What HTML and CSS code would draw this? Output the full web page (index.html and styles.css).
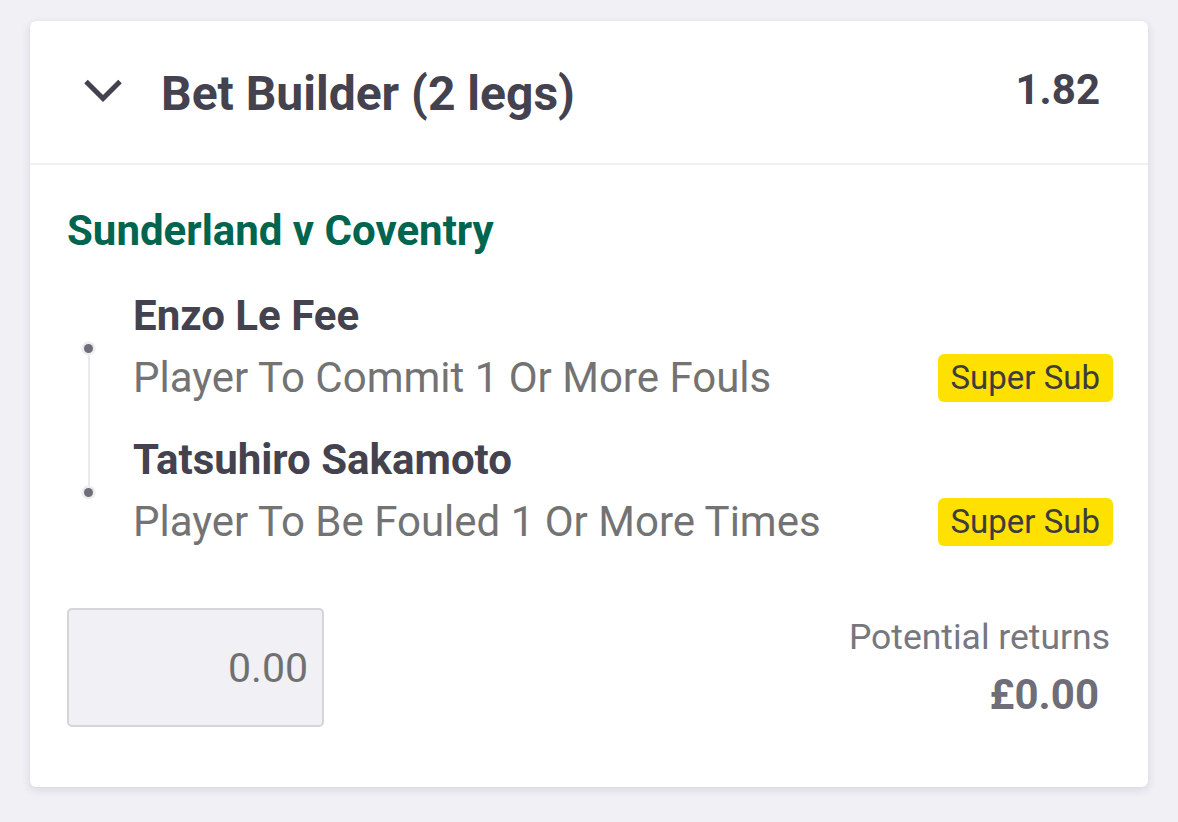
FILE: index.html
```html
<!DOCTYPE html>
<html lang="en">
<head>
<meta charset="utf-8">
<title>Bet Builder</title>
<link rel="stylesheet" href="styles.css">
</head>
<body>
<div class="card">
  <div class="header">
    <svg class="chevron" width="40" height="26" viewBox="0 0 40 26" aria-hidden="true">
      <path d="M3 3.5 L20 20.5 L37 3.5" fill="none" stroke="#43424e" stroke-width="5" stroke-linejoin="miter"/>
    </svg>
    <div class="title">Bet Builder (2 legs)</div>
    <div class="odds">1.82</div>
  </div>
  <div class="body">
    <div class="event">Sunderland v Coventry</div>
    <div class="legs">
      <div class="leg">
        <div class="marker"><span class="dot"></span></div>
        <div class="leg-content">
          <div class="player">Enzo Le Fee</div>
          <div class="market-row">
            <div class="market">Player To Commit 1 Or More Fouls</div>
            <div class="badge">Super Sub</div>
          </div>
        </div>
      </div>
      <div class="leg">
        <div class="marker"><span class="dot"></span></div>
        <div class="leg-content">
          <div class="player">Tatsuhiro Sakamoto</div>
          <div class="market-row">
            <div class="market">Player To Be Fouled 1 Or More Times</div>
            <div class="badge">Super Sub</div>
          </div>
        </div>
      </div>
    </div>
    <div class="footer">
      <div class="stake">0.00</div>
      <div class="returns">
        <div class="returns-label">Potential returns</div>
        <div class="returns-value">£0.00</div>
      </div>
    </div>
  </div>
</div>
</body>
</html>
```
FILE: styles.css
```css
* { box-sizing: border-box; }
html, body { margin: 0; padding: 0; }
body {
  background: #f0f0f5;
  font-family: Roboto, "Liberation Sans", Arial, sans-serif;
  padding-top: 21px;
  height: 822px;
}
.card {
  margin: 0 30px;
  width: 1118px;
  background: #ffffff;
  border-radius: 6px;
  box-shadow: 0 3px 10px rgba(40, 40, 70, 0.12), 0 0 2px rgba(40, 40, 70, 0.06);
}
.header {
  display: flex;
  align-items: center;
  height: 144px;
  padding: 0 48px 0 53px;
  border-bottom: 2px solid #efeff3;
}
.chevron {
  flex: none;
  display: block;
  margin-right: 38px;
  margin-top: -2px;
}
.title {
  flex: 1;
  font-size: 48px;
  font-weight: 700;
  color: #43424e;
  line-height: 56px;
  margin-top: 4px;
}
.odds {
  font-size: 42px;
  font-weight: 700;
  color: #43424e;
  line-height: 50px;
  margin-top: -4px;
}
.body {
  padding: 41px 35px 60px 37px;
}
.event {
  font-size: 42px;
  font-weight: 700;
  color: #00654e;
  line-height: 50px;
}
.legs {
  position: relative;
  margin-top: 35px;
  display: flex;
  flex-direction: column;
  gap: 33px;
}
.legs::before {
  content: "";
  position: absolute;
  left: 20.5px;
  width: 2px;
  top: 57px;
  bottom: 53px;
  background: #e9e9ee;
}
.leg {
  display: flex;
}
.marker {
  flex: none;
  width: 66px;
  display: flex;
  align-items: center;
  padding-top: 4px;
}
.dot {
  position: relative;
  display: block;
  width: 9px;
  height: 9px;
  margin-left: 17px;
  border-radius: 50%;
  background: #6e6e78;
  box-shadow: 0 0 0 2.5px #ececf1;
}
.leg-content {
  flex: 1;
}
.player {
  font-size: 42px;
  font-weight: 700;
  color: #43424e;
  line-height: 50px;
}
.market-row {
  display: flex;
  align-items: center;
  justify-content: space-between;
  margin-top: 13px;
  height: 48px;
}
.market {
  font-size: 42px;
  color: #737373;
  line-height: 48px;
}
.badge {
  background: #ffe100;
  color: #3d3d3d;
  font-size: 33px;
  line-height: 48px;
  height: 48px;
  padding: 0 13px;
  border-radius: 6px;
}
.footer {
  display: flex;
  justify-content: space-between;
  align-items: flex-start;
  margin-top: 62px;
}
.stake {
  width: 257px;
  height: 119px;
  background: #f0f0f5;
  border: 2px solid #d5d5d9;
  border-radius: 5px;
  font-size: 41px;
  color: #707070;
  display: flex;
  align-items: center;
  justify-content: flex-end;
  padding-right: 14px;
}
.returns {
  text-align: right;
  padding-top: 8px;
  padding-right: 3px;
}
.returns-label {
  font-size: 35.5px;
  color: #777780;
  line-height: 42px;
}
.returns-value {
  font-size: 42px;
  font-weight: 700;
  color: #6e6d78;
  line-height: 50px;
  margin-top: 12px;
  padding-right: 11px;
}
```
